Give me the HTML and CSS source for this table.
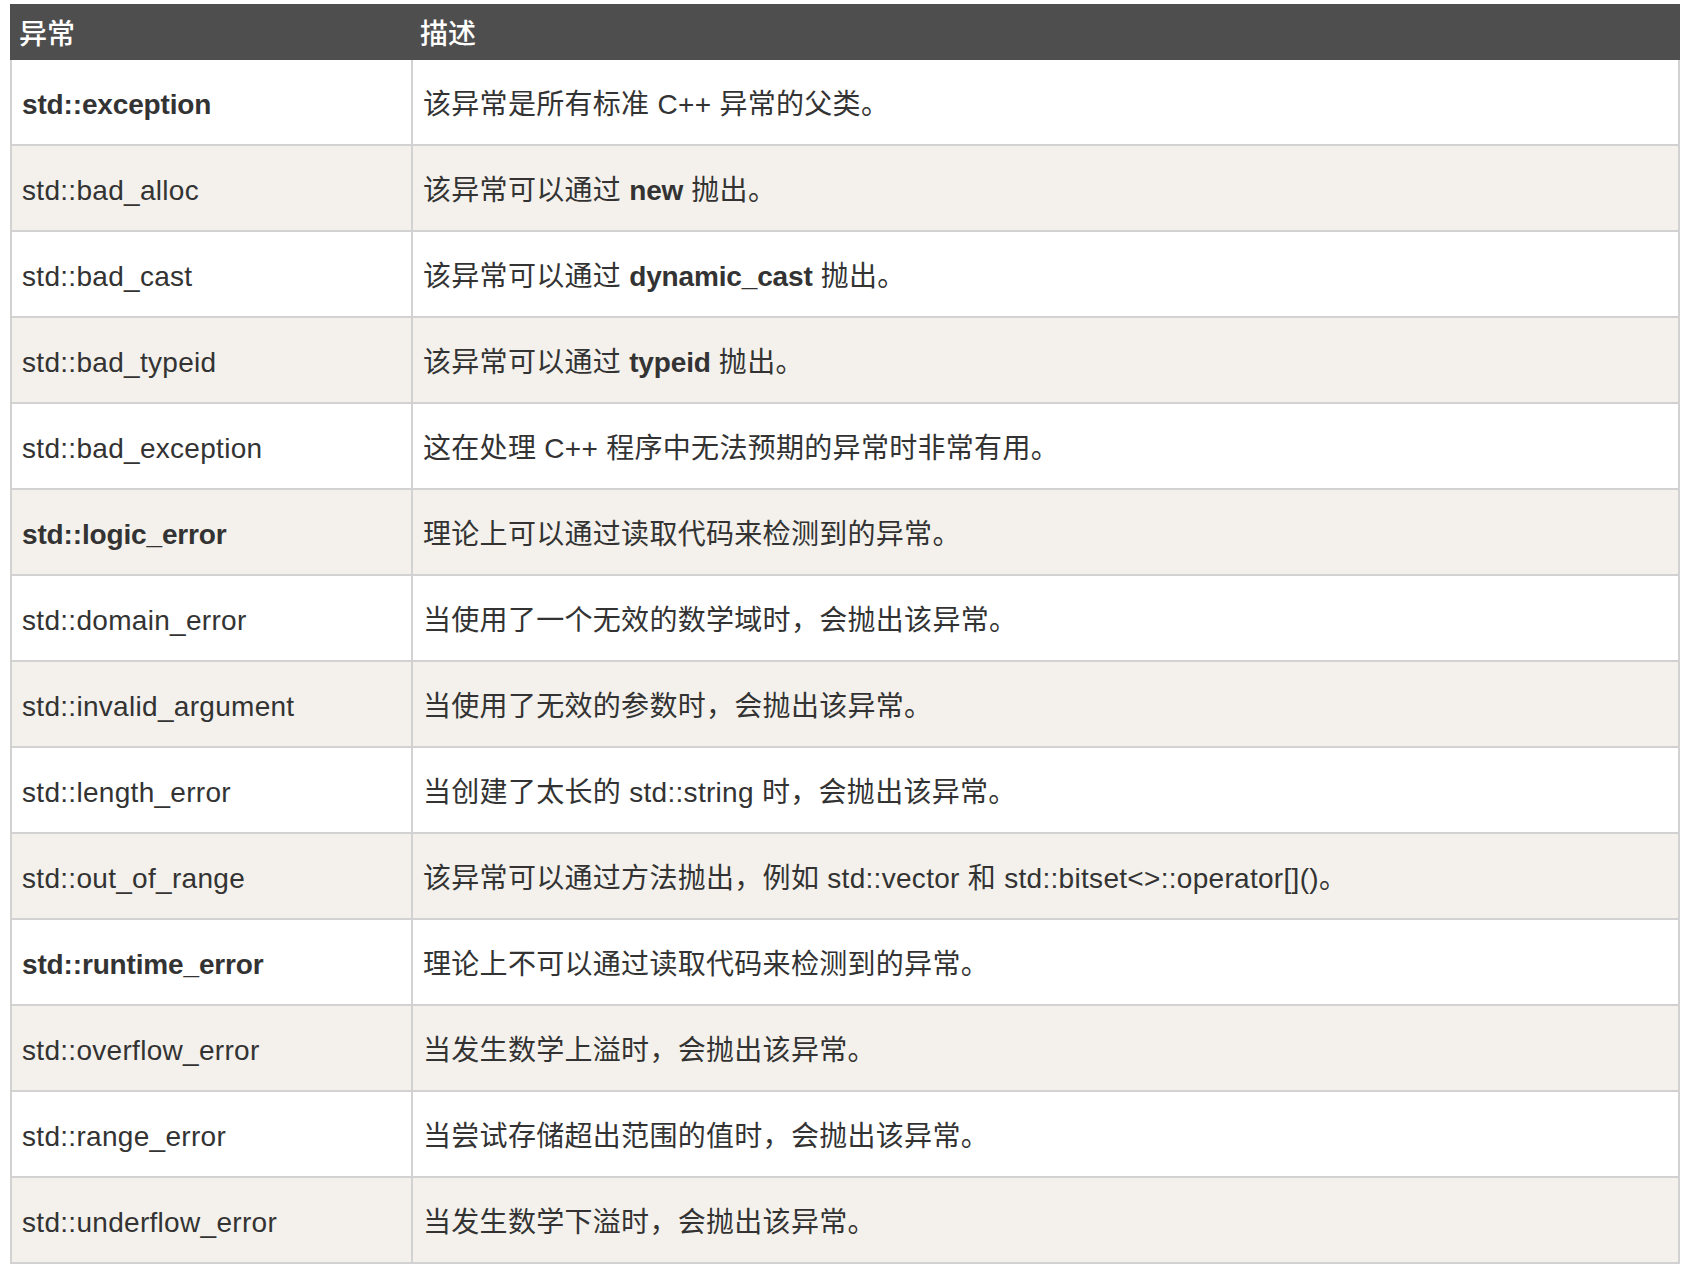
FILE: index.html
```html
<!DOCTYPE html>
<html lang="zh-CN">
<head>
<meta charset="utf-8">
<title>C++ 异常</title>
<link rel="stylesheet" href="styles.css">
</head>
<body>
<div class="ref-table">
  <div class="head">
    <div class="th">异常</div>
    <div class="th">描述</div>
  </div>
  <div class="body">
    <div class="td odd"><b>std::exception</b></div><div class="td odd">该异常是所有标准 C++ 异常的父类。</div>
    <div class="td even">std::bad_alloc</div><div class="td even">该异常可以通过 <b>new</b> 抛出。</div>
    <div class="td odd">std::bad_cast</div><div class="td odd">该异常可以通过 <b>dynamic_cast</b> 抛出。</div>
    <div class="td even">std::bad_typeid</div><div class="td even">该异常可以通过 <b>typeid</b> 抛出。</div>
    <div class="td odd">std::bad_exception</div><div class="td odd">这在处理 C++ 程序中无法预期的异常时非常有用。</div>
    <div class="td even"><b>std::logic_error</b></div><div class="td even">理论上可以通过读取代码来检测到的异常。</div>
    <div class="td odd">std::domain_error</div><div class="td odd">当使用了一个无效的数学域时，会抛出该异常。</div>
    <div class="td even">std::invalid_argument</div><div class="td even">当使用了无效的参数时，会抛出该异常。</div>
    <div class="td odd">std::length_error</div><div class="td odd">当创建了太长的 std::string 时，会抛出该异常。</div>
    <div class="td even">std::out_of_range</div><div class="td even">该异常可以通过方法抛出，例如 std::vector 和 std::bitset&lt;&gt;::operator[]()。</div>
    <div class="td odd"><b>std::runtime_error</b></div><div class="td odd">理论上不可以通过读取代码来检测到的异常。</div>
    <div class="td even">std::overflow_error</div><div class="td even">当发生数学上溢时，会抛出该异常。</div>
    <div class="td odd">std::range_error</div><div class="td odd">当尝试存储超出范围的值时，会抛出该异常。</div>
    <div class="td even">std::underflow_error</div><div class="td even">当发生数学下溢时，会抛出该异常。</div>
  </div>
</div>
</body>
</html>
```
FILE: styles.css
```css
html, body {
  margin: 0;
  padding: 0;
  background: #ffffff;
}
body {
  font-family: "Liberation Sans", "Noto Sans CJK SC", sans-serif;
  font-size: 28px;
  color: #333333;
}
.ref-table {
  margin: 4px 0 0 10px;
  width: 1670px;
}
.head {
  display: grid;
  grid-template-columns: 401px 1fr;
  height: 56px;
  background: #4e4e4e;
  color: #ffffff;
}
.th {
  padding: 6px 9px 0 9px;
  line-height: 50px;
  font-weight: 500;
}
.body {
  display: grid;
  grid-template-columns: 399px 1fr;
  grid-auto-rows: 84px;
  gap: 2px;
  padding: 0 2px 2px 2px;
  background: #d2d2d2;
}
.td {
  padding: 5px 10px 0 10px;
  line-height: 79px;
  letter-spacing: 0.3px;
  white-space: nowrap;
}
.td b {
  font-weight: 700;
  letter-spacing: -0.15px;
}
.odd {
  background: #ffffff;
}
.even {
  background: #f4f1ec;
}
```
